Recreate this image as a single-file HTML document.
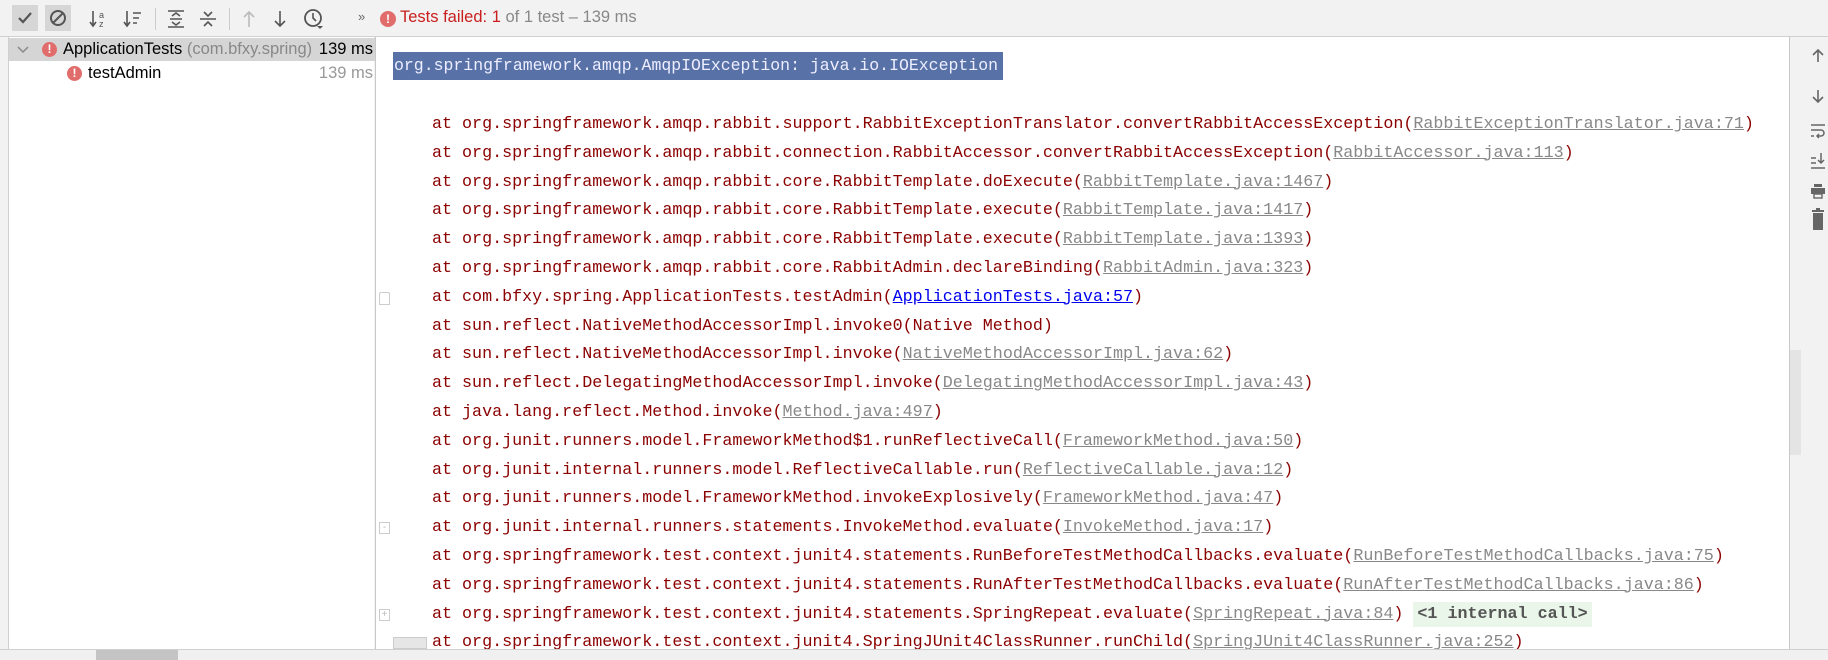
<!DOCTYPE html>
<html><head><meta charset="utf-8"><style>
*{margin:0;padding:0;box-sizing:border-box}
body{width:1828px;height:659px;overflow:hidden;background:#f2f2f2;font-family:"Liberation Sans",sans-serif;position:relative}
.tb{position:absolute;left:0;top:0;width:1828px;height:37px;background:#f2f2f2;border-bottom:1px solid #d0d0d0}
.ic{position:absolute;top:5px;width:26px;height:26px}
.left{position:absolute;left:8px;top:37px;width:366px;height:612px;background:#fff;border-left:1px solid #d0d0d0}
.row{position:absolute;left:0;width:366px;height:23px;font-size:16.5px;line-height:23px;color:#000}
.err{position:absolute;width:15px;height:15px;border-radius:50%;background:#e06c6c;color:#fff;font-size:12px;font-weight:bold;line-height:15px;text-align:center}
.cons{position:absolute;left:375px;top:37px;width:1415px;height:612px;background:#fff;border-left:1px solid #c8c8c8;border-right:1px solid #c8c8c8}
.code{position:absolute;left:432px;top:111px;font-family:"Liberation Mono",monospace;font-size:16.7px;line-height:28.8px;color:#8b0000;white-space:pre}
.l{color:#888;text-decoration:underline}
.b{color:#0000ee;text-decoration:underline}
.ic2{background:#e9f6e9;color:#555;font-weight:bold;padding:3px 4px}
.hdr{position:absolute;left:393px;top:52px;height:28px;width:610px;background:#5872a8;color:#eef;font-family:"Liberation Mono",monospace;font-size:16.5px;line-height:28px;padding-left:1px;white-space:pre}
.rt{position:absolute;left:1804px;top:37px;width:24px;height:612px;background:#f2f2f2}
.bot{position:absolute;left:0;top:649px;width:1828px;height:10px;background:#f0f0f0;border-top:1px solid #d0d0d0}
</style></head><body>
<div class="tb">
 <div class="ic" style="left:12px;background:#d6d6d6"><svg width="26" height="26"><path d="M7 13l4 4 8-9" stroke="#555" stroke-width="2.2" fill="none"/></svg></div>
 <div class="ic" style="left:45px;background:#d6d6d6"><svg width="26" height="26"><circle cx="13" cy="13" r="7" stroke="#555" stroke-width="2" fill="none"/><path d="M8 18L18 8" stroke="#555" stroke-width="2"/></svg></div>
 <svg style="position:absolute;left:88px;top:8px" width="24" height="22"><path d="M5 3v14M2 14l3 4 3-4" stroke="#555" stroke-width="1.6" fill="none"/><text x="11" y="10" font-size="9" fill="#555">a</text><text x="11" y="19" font-size="9" fill="#555">z</text></svg>
 <svg style="position:absolute;left:122px;top:8px" width="24" height="22"><path d="M5 3v14M2 14l3 4 3-4M11 5h8M11 10h6M11 15h4" stroke="#555" stroke-width="1.6" fill="none"/></svg>
 <div style="position:absolute;left:155px;top:8px;width:1px;height:22px;background:#ccc"></div>
 <svg style="position:absolute;left:165px;top:8px" width="22" height="22"><path d="M3 3h16M3 19h16M7 8l4-3 4 3M7 14l4 3 4-3M5 11h12" stroke="#555" stroke-width="1.6" fill="none"/></svg>
 <svg style="position:absolute;left:197px;top:8px" width="22" height="22"><path d="M3 11h16M7 4l4 4 4-4M7 18l4-4 4 4" stroke="#555" stroke-width="1.6" fill="none"/></svg>
 <div style="position:absolute;left:229px;top:8px;width:1px;height:22px;background:#ccc"></div>
 <svg style="position:absolute;left:238px;top:8px" width="22" height="22"><path d="M11 4v15M6 9l5-5 5 5" stroke="#bbb" stroke-width="1.6" fill="none"/></svg>
 <svg style="position:absolute;left:269px;top:8px" width="22" height="22"><path d="M11 3v15M6 13l5 5 5-5" stroke="#555" stroke-width="1.6" fill="none"/></svg>
 <svg style="position:absolute;left:302px;top:7px" width="24" height="24"><circle cx="11" cy="11" r="8" stroke="#555" stroke-width="1.8" fill="none"/><path d="M11 6v5l3 3" stroke="#555" stroke-width="1.6" fill="none"/><path d="M15 19h6l-3 3z" fill="#555"/></svg>
 <span style="position:absolute;left:358px;top:9px;font-size:13px;color:#666">»</span>
 <div class="err" style="left:380px;top:11px;width:16px;height:16px;line-height:16px">!</div>
 <span style="position:absolute;left:400px;top:8px;font-size:16.5px;color:#c81e1e">Tests failed: 1 <span style="color:#888">of 1 test – 139 ms</span></span>
</div>
<div class="left">
 <div class="row" style="top:1px;background:#d5d5d5">
  <svg style="position:absolute;left:8px;top:7px" width="12" height="10"><path d="M1 2l5 5 5-5" stroke="#888" stroke-width="1.5" fill="none"/></svg>
  <div class="err" style="left:33px;top:4px">!</div>
  <span style="position:absolute;left:54px">ApplicationTests <span style="color:#888">(com.bfxy.spring)</span></span>
  <span style="position:absolute;right:2px">139 ms</span>
 </div>
 <div class="row" style="top:25px">
  <div class="err" style="left:58px;top:4px">!</div>
  <span style="position:absolute;left:79px">testAdmin</span>
  <span style="position:absolute;right:2px;color:#999">139 ms</span>
 </div>
</div>
<div class="cons"></div>
<div class="hdr">org.springframework.amqp.AmqpIOException: java.io.IOException</div>
<div style="position:absolute;left:379px;top:292px;width:11px;height:13px;border:1px solid #ccc;border-radius:2px 2px 0 0"></div>
<div style="position:absolute;left:379px;top:522px;width:11px;height:12px;border:1px solid #ccc;font-size:10px;line-height:9px;color:#bbb;text-align:center">-</div>
<div style="position:absolute;left:379px;top:609px;width:11px;height:12px;border:1px solid #ccc;font-size:10px;line-height:10px;color:#bbb;text-align:center">+</div>
<div style="position:absolute;left:393px;top:637px;width:34px;height:12px;background:#e6e6e6;border:1px solid #ccc"></div>
<div class="code">at org.springframework.amqp.rabbit.support.RabbitExceptionTranslator.convertRabbitAccessException(<span class="l">RabbitExceptionTranslator.java:71</span>)
at org.springframework.amqp.rabbit.connection.RabbitAccessor.convertRabbitAccessException(<span class="l">RabbitAccessor.java:113</span>)
at org.springframework.amqp.rabbit.core.RabbitTemplate.doExecute(<span class="l">RabbitTemplate.java:1467</span>)
at org.springframework.amqp.rabbit.core.RabbitTemplate.execute(<span class="l">RabbitTemplate.java:1417</span>)
at org.springframework.amqp.rabbit.core.RabbitTemplate.execute(<span class="l">RabbitTemplate.java:1393</span>)
at org.springframework.amqp.rabbit.core.RabbitAdmin.declareBinding(<span class="l">RabbitAdmin.java:323</span>)
at com.bfxy.spring.ApplicationTests.testAdmin(<span class="b">ApplicationTests.java:57</span>)
at sun.reflect.NativeMethodAccessorImpl.invoke0(Native Method)
at sun.reflect.NativeMethodAccessorImpl.invoke(<span class="l">NativeMethodAccessorImpl.java:62</span>)
at sun.reflect.DelegatingMethodAccessorImpl.invoke(<span class="l">DelegatingMethodAccessorImpl.java:43</span>)
at java.lang.reflect.Method.invoke(<span class="l">Method.java:497</span>)
at org.junit.runners.model.FrameworkMethod$1.runReflectiveCall(<span class="l">FrameworkMethod.java:50</span>)
at org.junit.internal.runners.model.ReflectiveCallable.run(<span class="l">ReflectiveCallable.java:12</span>)
at org.junit.runners.model.FrameworkMethod.invokeExplosively(<span class="l">FrameworkMethod.java:47</span>)
at org.junit.internal.runners.statements.InvokeMethod.evaluate(<span class="l">InvokeMethod.java:17</span>)
at org.springframework.test.context.junit4.statements.RunBeforeTestMethodCallbacks.evaluate(<span class="l">RunBeforeTestMethodCallbacks.java:75</span>)
at org.springframework.test.context.junit4.statements.RunAfterTestMethodCallbacks.evaluate(<span class="l">RunAfterTestMethodCallbacks.java:86</span>)
at org.springframework.test.context.junit4.statements.SpringRepeat.evaluate(<span class="l">SpringRepeat.java:84</span>) <span class="ic2">&lt;1 internal call&gt;</span>
at org.springframework.test.context.junit4.SpringJUnit4ClassRunner.runChild(<span class="l">SpringJUnit4ClassRunner.java:252</span>)</div>
<div style="position:absolute;left:1790px;top:350px;width:11px;height:105px;background:#e4e4e4"></div>
<div class="rt">
 <svg style="position:absolute;left:6px;top:10px" width="16" height="170">
  <path d="M8 3v12M3 8l5-5 5 5" stroke="#666" stroke-width="1.6" fill="none"/>
  <path d="M8 43v12M3 50l5 5 5-5" stroke="#666" stroke-width="1.6" fill="none"/>
  <path d="M1 78h14M1 83h10a3 3 0 010 6H7M9 87l-2 2 2 2M1 89h3" stroke="#666" stroke-width="1.5" fill="none"/>
  <path d="M1 111h5M1 116h5M1 121h14M11 106v10M8 113l3 3 3-3" stroke="#666" stroke-width="1.5" fill="none"/>
  <rect x="4" y="137" width="8" height="3" fill="#666"/><rect x="1" y="141" width="14" height="6" fill="#666"/><rect x="4" y="147" width="8" height="4" fill="none" stroke="#666" stroke-width="1.4"/>
  <rect x="2" y="163" width="12" height="2" fill="#666"/><rect x="6" y="161" width="4" height="2" fill="#666"/><rect x="3" y="166" width="10" height="4" fill="#666"/>
 </svg>
 <svg style="position:absolute;left:6px;top:180px" width="16" height="16"><rect x="3" y="0" width="10" height="13" fill="#666"/></svg>
</div>
<div class="bot"><div style="position:absolute;left:96px;top:0;width:82px;height:10px;background:#c4c4c4"></div></div>
</body></html>
